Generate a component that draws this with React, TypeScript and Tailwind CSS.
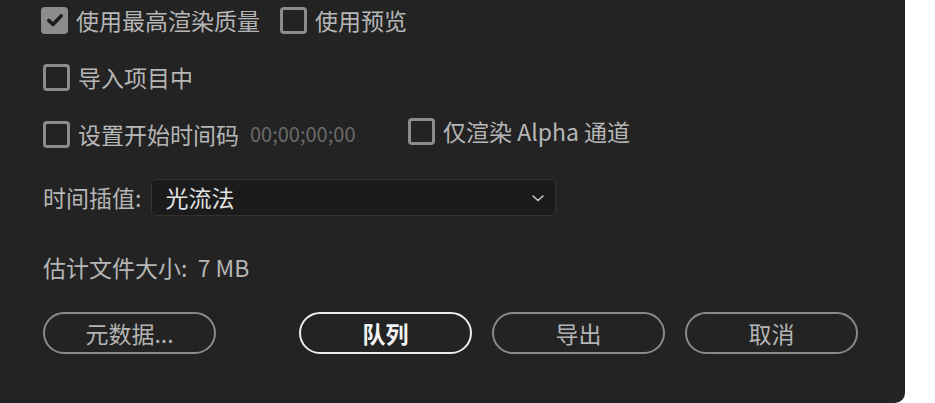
import React from "react";

const font = { fontFamily: '"Noto Sans CJK SC", "Noto Sans", sans-serif' };

function Box({ checked = false }: { checked?: boolean }) {
  return checked ? (
    <div className="w-[27px] h-[27px] rounded-[4px] bg-[#8c8c8c] flex items-center justify-center shrink-0">
      <svg width="20" height="20" viewBox="0 0 16 16">
        <path d="M3 8.3 L6.4 11.6 L13 4.6" fill="none" stroke="#1e1e1e" strokeWidth="2.8" strokeLinecap="round" strokeLinejoin="round" />
      </svg>
    </div>
  ) : (
    <div className="w-[27px] h-[27px] rounded-[4px] border-[3px] border-[#8c8c8c] shrink-0" />
  );
}

function Check({ label, checked = false, extra }: { label: string; checked?: boolean; extra?: React.ReactNode }) {
  return (
    <div className="flex items-center gap-[8px]">
      <Box checked={checked} />
      <span className="text-[23px] leading-none text-[#b6b6b6]">{label}</span>
      {extra}
    </div>
  );
}

function Btn({ label, primary = false }: { label: string; primary?: boolean }) {
  return (
    <div
      className={
        "w-[173px] h-[42px] rounded-full border-2 flex items-center justify-center text-[23px] leading-none " +
        (primary ? "border-[#ececec] text-[#f2f2f2] font-semibold" : "border-[#8a8a8a] text-[#b4b4b4]")
      }
    >
      {label}
    </div>
  );
}

export default function App() {
  return (
    <div className="w-[935px] h-[403px] bg-white" style={font}>
      <div className="w-[905px] h-[403px] bg-[#232323] rounded-br-[10px] pl-[41px] flex flex-col">
        <div className="h-[40px] flex items-center gap-[20px]">
          <Check label="使用最高渲染质量" checked />
          <Check label="使用预览" />
        </div>
        <div className="mt-[17px] h-[40px] flex items-center pl-[2px]">
          <Check label="导入项目中" />
        </div>
        <div className="mt-[17px] h-[40px] flex items-center pl-[2px]">
          <div className="w-[365px] flex items-center">
            <Check
              label="设置开始时间码"
              extra={<span className="ml-[3px] text-[20px] leading-none text-[#6a6a6a]">00;00;00;00</span>}
            />
          </div>
          <div className="-mt-[5px]">
            <Check label="仅渲染 Alpha 通道" />
          </div>
        </div>
        <div className="mt-[25px] h-[37px] flex items-center pl-[2px] gap-[10px]">
          <span className="text-[23px] leading-none text-[#b6b6b6]">时间插值:</span>
          <div className="w-[405px] h-[37px] rounded-[5px] bg-[#1b1b1b] border border-[#323232] flex items-center justify-between pl-[13px] pr-[10px]">
            <span className="text-[23px] leading-none text-[#e2e2e2]">光流法</span>
            <svg width="14" height="10" viewBox="0 0 14 10">
              <path d="M2 3 L7 7.5 L12 3" fill="none" stroke="#c8c8c8" strokeWidth="1.6" strokeLinecap="round" strokeLinejoin="round" />
            </svg>
          </div>
        </div>
        <div className="mt-[31px] h-[40px] flex items-center pl-[2px]">
          <span className="text-[23px] leading-none text-[#b6b6b6]">估计文件大小:&nbsp;&nbsp;7 MB</span>
        </div>
        <div className="mt-[25px] flex items-center pl-[2px]">
          <Btn label="元数据..." />
          <div className="ml-[83px] flex gap-[20px]">
            <Btn label="队列" primary />
            <Btn label="导出" />
            <Btn label="取消" />
          </div>
        </div>
      </div>
    </div>
  );
}
